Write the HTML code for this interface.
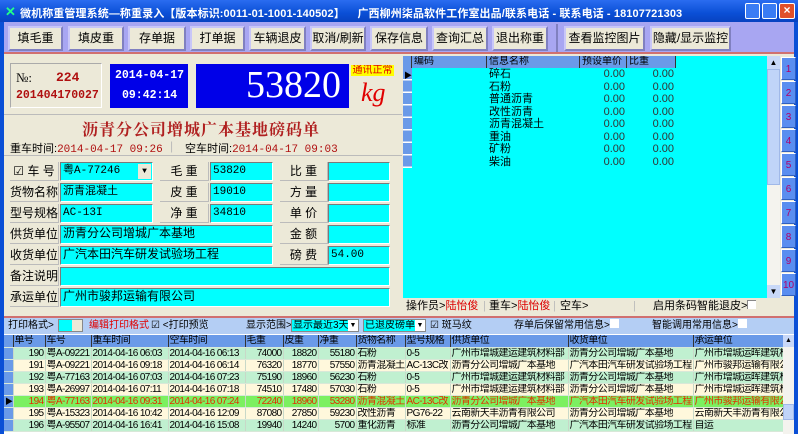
<!DOCTYPE html>
<html><head><meta charset="utf-8"><style>
*{box-sizing:border-box;margin:0;padding:0}
body{width:798px;height:434px;overflow:hidden;position:relative;background:#0a4fd6;font-family:"Liberation Sans","Noto Sans CJK SC",sans-serif;font-size:12px;color:#000}
.a{position:absolute;white-space:nowrap;overflow:hidden}
.btn{position:absolute;top:26px;height:25px;background:#ece9d8;border:2px solid #c8c6f8;border-right-color:#8080c0;border-bottom-color:#8080c0;text-align:center;line-height:21px;font-size:12px;white-space:nowrap;overflow:hidden}
.lbl{position:absolute;height:19px;line-height:19px;font-size:12px;text-align:center;border-bottom:1px solid #bbb;border-right:1px solid #bbb;background:#ece9d8;white-space:nowrap;overflow:hidden}
.inp{position:absolute;height:19px;line-height:17px;background:#00ffff;border:1px solid #7a7a7a;border-right-color:#fff;border-bottom-color:#fff;font-family:"Liberation Mono","Noto Sans CJK SC",monospace;font-size:11px;padding-left:2px;white-space:nowrap;overflow:hidden}
.gh{position:absolute;height:12px;line-height:12px;font-size:10px;border-right:1px solid #333;padding-left:2px;overflow:hidden;white-space:nowrap}
.nb{position:absolute;left:781px;width:15px;height:23px;background:#5a8ef0;color:#b0006a;font-size:10px;text-align:center;line-height:23px;border:1px solid #fff;border-right-color:#3060c0;border-bottom-color:#3060c0}
table{border-collapse:collapse;position:absolute}
td{font-size:10px;letter-spacing:-0.6px;height:12px;line-height:11px;padding:0 1px;white-space:nowrap;overflow:hidden;border-right:1px solid #c8d8c8;border-bottom:1px solid #d8e8d8}
</style></head><body>
<div class="a" style="left:0;top:0;width:798px;height:22px;background:linear-gradient(#2a6cf0,#0a4fd6 60%,#0842c0)"></div>
<div class="a" style="left:5px;top:4px;color:#2f8;font-size:13px;font-weight:bold">✕</div>
<div class="a" style="left:20px;top:5px;color:#fff;font-weight:bold;font-size:11px;letter-spacing:0.1px">微机称重管理系统—称重录入【版本标识:0011-01-1001-140502】&nbsp;&nbsp;&nbsp;&nbsp;广西柳州柒品软件工作室出品/联系电话 - 联系电话 - 18107721303</div>
<div class="a" style="left:745px;top:3px;width:15px;height:16px;background:#3a7cf4;border:1px solid #fff;border-radius:2px"></div>
<div class="a" style="left:762px;top:3px;width:15px;height:16px;background:#3a7cf4;border:1px solid #fff;border-radius:2px"></div>
<div class="a" style="left:779px;top:3px;width:16px;height:16px;background:#e0502a;border:1px solid #fff;border-radius:2px;color:#fff;text-align:center;line-height:13px;font-weight:bold">×</div>
<div class="a" style="left:4px;top:22px;width:790px;height:31px;background:#a8a6f2"></div>
<div class="btn" style="left:8px;width:55px">填毛重</div>
<div class="btn" style="left:68px;width:56px">填皮重</div>
<div class="btn" style="left:128px;width:58px">存单据</div>
<div class="btn" style="left:190px;width:55px">打单据</div>
<div class="btn" style="left:249px;width:57px">车辆退皮</div>
<div class="btn" style="left:310px;width:56px">取消/刷新</div>
<div class="btn" style="left:370px;width:58px">保存信息</div>
<div class="btn" style="left:432px;width:56px">查询汇总</div>
<div class="btn" style="left:492px;width:56px">退出称重</div>
<div class="a" style="left:556px;top:24px;width:2px;height:28px;background:#8080c0"></div>
<div class="btn" style="left:564px;width:81px">查看监控图片</div>
<div class="btn" style="left:650px;width:81px">隐藏/显示监控</div>
<div class="a" style="left:4px;top:52px;width:790px;height:2px;background:#d07070"></div>
<div class="a" style="left:4px;top:54px;width:398px;height:264px;background:#ece9d8"></div>
<div class="a" style="left:10px;top:63px;width:92px;height:45px;border:1px solid #aaa;border-right-color:#fff;border-bottom-color:#fff;background:#ece9d8"></div>
<div class="a" style="left:16px;top:70px;font-family:'Liberation Serif',serif;font-size:13px">№:</div>
<div class="a" style="left:56px;top:70px;color:#b01010;font-family:'Liberation Mono',monospace;font-weight:bold;font-size:13px">224</div>
<div class="a" style="left:16px;top:89px;color:#b01010;font-family:'Liberation Mono',monospace;font-weight:bold;font-size:11.5px">201404170027</div>
<div class="a" style="left:110px;top:64px;width:78px;height:44px;background:#0000e8"></div>
<div class="a" style="left:115px;top:69px;color:#fff;font-family:'Liberation Mono',monospace;font-weight:bold;font-size:11.5px">2014-04-17</div>
<div class="a" style="left:122px;top:89px;color:#fff;font-family:'Liberation Mono',monospace;font-weight:bold;font-size:11.5px">09:42:14</div>
<div class="a" style="left:196px;top:64px;width:153px;height:44px;background:#0000e8"></div>
<div class="a" style="left:246px;top:62px;color:#fff;font-family:'Liberation Serif',serif;font-size:38px;line-height:46px">53820</div>
<div class="a" style="left:351px;top:65px;width:43px;height:11px;background:#ffff00;color:#e00000;font-size:10px;line-height:11px;text-align:center">通讯正常</div>
<div class="a" style="left:361px;top:78px;color:#e00000;font-family:'Liberation Serif',serif;font-style:italic;font-size:26px;line-height:30px">kg</div>
<div class="a" style="left:4px;top:114px;width:398px;height:1px;background:#bbb"></div>
<div class="a" style="left:0;top:117px;width:402px;text-align:center;color:#b02020;font-family:'Liberation Serif','Noto Serif CJK SC',serif;font-size:16px;font-weight:bold;letter-spacing:1px">沥青分公司增城广本基地磅码单</div>
<div class="a" style="left:10px;top:140px;font-size:11px">重车时间:<span style="color:#b01010;font-family:'Liberation Mono',monospace">2014-04-17 09:26</span></div>
<div class="a" style="left:170px;top:139px;color:#bbb">|</div>
<div class="a" style="left:185px;top:140px;font-size:11px">空车时间:<span style="color:#b01010;font-family:'Liberation Mono',monospace">2014-04-17 09:03</span></div>
<div class="a" style="left:4px;top:155px;width:398px;height:1px;background:#bbb"></div>
<div class="lbl" style="left:10px;top:162px;width:49px">☑ 车 号</div>
<div class="inp" style="left:60px;top:162px;width:93px">粤A-77246<span style="position:absolute;right:1px;top:1px;width:13px;height:15px;background:#ece9d8;font-size:8px;line-height:15px;text-align:center">▼</span></div>
<div class="lbl" style="left:160px;top:162px;width:49px">毛 重</div>
<div class="inp" style="left:210px;top:162px;width:63px">53820</div>
<div class="lbl" style="left:280px;top:162px;width:48px">比 重</div>
<div class="inp" style="left:328px;top:162px;width:62px"></div>
<div class="lbl" style="left:10px;top:183px;width:49px">货物名称</div>
<div class="inp" style="left:60px;top:183px;width:93px">沥青混凝土</div>
<div class="lbl" style="left:160px;top:183px;width:49px">皮 重</div>
<div class="inp" style="left:210px;top:183px;width:63px">19010</div>
<div class="lbl" style="left:280px;top:183px;width:48px">方 量</div>
<div class="inp" style="left:328px;top:183px;width:62px"></div>
<div class="lbl" style="left:10px;top:204px;width:49px">型号规格</div>
<div class="inp" style="left:60px;top:204px;width:93px">AC-13I</div>
<div class="lbl" style="left:160px;top:204px;width:49px">净 重</div>
<div class="inp" style="left:210px;top:204px;width:63px">34810</div>
<div class="lbl" style="left:280px;top:204px;width:48px">单 价</div>
<div class="inp" style="left:328px;top:204px;width:62px"></div>
<div class="lbl" style="left:10px;top:225px;width:49px">供货单位</div>
<div class="inp" style="left:60px;top:225px;width:213px;font-size:12px">沥青分公司增城广本基地</div>
<div class="lbl" style="left:280px;top:225px;width:48px">金 额</div>
<div class="inp" style="left:328px;top:225px;width:62px"></div>
<div class="lbl" style="left:10px;top:246px;width:49px">收货单位</div>
<div class="inp" style="left:60px;top:246px;width:213px;font-size:12px">广汽本田汽车研发试验场工程</div>
<div class="lbl" style="left:280px;top:246px;width:48px">磅 费</div>
<div class="inp" style="left:328px;top:246px;width:62px">54.00</div>
<div class="lbl" style="left:10px;top:267px;width:49px">备注说明</div>
<div class="inp" style="left:60px;top:267px;width:330px"></div>
<div class="lbl" style="left:10px;top:288px;width:49px">承运单位</div>
<div class="inp" style="left:60px;top:288px;width:330px;font-size:12px">广州市骏邦运输有限公司</div>
<div class="a" style="left:402px;top:54px;width:392px;height:264px;background:#ece9d8"></div>
<div class="a" style="left:403px;top:56px;width:364px;height:242px;background:#00ffff"></div>
<div class="a" style="left:403px;top:56px;width:273px;height:12px;background:#6a9ae8"></div>
<div class="gh" style="left:403px;top:56px;width:9px"></div>
<div class="gh" style="left:412px;top:56px;width:75px">编码</div>
<div class="gh" style="left:487px;top:56px;width:93px">信息名称</div>
<div class="gh" style="left:580px;top:56px;width:47px">预设单价</div>
<div class="gh" style="left:627px;top:56px;width:49px">比重</div>
<div class="a" style="left:403px;top:68px;width:9px;height:100px;background:repeating-linear-gradient(#6a9ae8 0 11px,#fff 11px 12.5px)"></div>
<div class="a" style="left:404px;top:70px;font-size:8px">▶</div>
<div class="a" style="left:489px;top:68px;font-size:11px;line-height:12.5px">碎石<br>石粉<br>普通沥青<br>改性沥青<br>沥青混凝土<br>重油<br>矿粉<br>柴油</div>
<div class="a" style="left:580px;top:68px;width:45px;text-align:right;font-size:11px;line-height:12.5px;color:#333">0.00<br>0.00<br>0.00<br>0.00<br>0.00<br>0.00<br>0.00<br>0.00</div>
<div class="a" style="left:627px;top:68px;width:47px;text-align:right;font-size:11px;line-height:12.5px;color:#333">0.00<br>0.00<br>0.00<br>0.00<br>0.00<br>0.00<br>0.00<br>0.00</div>
<div class="a" style="left:767px;top:56px;width:13px;height:242px;background:#f4f3ee"></div>
<div class="a" style="left:767px;top:56px;width:13px;height:13px;background:#c8d8f8;font-size:8px;text-align:center;line-height:13px">▲</div>
<div class="a" style="left:767px;top:69px;width:13px;height:116px;background:#c0d4f8;border:1px solid #a0b8e8"></div>
<div class="a" style="left:767px;top:285px;width:13px;height:13px;background:#c8d8f8;font-size:8px;text-align:center;line-height:13px">▼</div>
<div class="nb" style="top:57px">1</div><div class="nb" style="top:81px">2</div><div class="nb" style="top:105px">3</div><div class="nb" style="top:129px">4</div><div class="nb" style="top:153px">5</div><div class="nb" style="top:177px">6</div><div class="nb" style="top:201px">7</div><div class="nb" style="top:225px">8</div><div class="nb" style="top:249px">9</div><div class="nb" style="top:273px">10</div>
<div class="a" style="left:403px;top:299px;width:390px;height:15px;font-size:11px;line-height:15px">
<span style="position:absolute;left:3px">操作员&gt;<span style="color:#d00">陆怡俊</span></span>
<span style="position:absolute;left:80px;color:#bbb">|</span>
<span style="position:absolute;left:86px">重车&gt;<span style="color:#d00">陆怡俊</span></span>
<span style="position:absolute;left:150px;color:#bbb">|</span>
<span style="position:absolute;left:157px">空车&gt;</span>
<span style="position:absolute;left:230px;color:#bbb">|</span>
<span style="position:absolute;left:250px">启用条码智能退皮&gt;<span style="display:inline-block;width:9px;height:9px;background:#fff;border-left:1px solid #888;border-top:1px solid #888"></span></span></div>
<div class="a" style="left:4px;top:316px;width:790px;height:2px;background:#d07070"></div>
<div class="a" style="left:4px;top:318px;width:790px;height:16px;background:#b4cef4"></div>
<div class="a" style="left:8px;top:319px;font-size:10px;line-height:14px">打印格式&gt;</div>
<div class="a" style="left:58px;top:319px;width:25px;height:13px;background:#00ffff;border:1px solid #888"><span style="position:absolute;right:0;top:0;width:10px;height:11px;background:#ece9d8"></span></div>
<div class="a" style="left:89px;top:319px;font-size:10px;line-height:14px;color:#e00000">编辑打印格式</div>
<div class="a" style="left:151px;top:319px;font-size:10px;line-height:14px">☑ &lt;打印预览</div>
<div class="a" style="left:246px;top:319px;font-size:10px;line-height:14px">显示范围&gt;</div>
<div class="a" style="left:291px;top:319px;width:68px;height:13px;background:#00ffff;border:1px solid #888;font-size:10px;line-height:11px;padding-left:1px">显示最近3天<span style="position:absolute;right:0;top:0;width:10px;height:11px;background:#fff;font-size:7px;text-align:center">▼</span></div>
<div class="a" style="left:363px;top:319px;width:63px;height:13px;background:#00ffff;border:1px solid #888;font-size:10px;line-height:11px;padding-left:1px">已退皮磅单<span style="position:absolute;right:0;top:0;width:10px;height:11px;background:#fff;font-size:7px;text-align:center">▼</span></div>
<div class="a" style="left:430px;top:319px;font-size:10px;line-height:14px">☑ 斑马纹</div>
<div class="a" style="left:514px;top:319px;font-size:10px;line-height:14px">存单后保留常用信息&gt;<span style="display:inline-block;width:9px;height:9px;background:#fff"></span></div>
<div class="a" style="left:652px;top:319px;font-size:10px;line-height:14px">智能调用常用信息&gt;<span style="display:inline-block;width:9px;height:9px;background:#fff"></span></div>
<div class="a" style="left:4px;top:334px;width:790px;height:100px;background:#fff"></div>
<table style="left:4px;top:335px;width:779px;table-layout:fixed">
<colgroup><col style="width:9px"><col style="width:32px"><col style="width:46px"><col style="width:77px"><col style="width:77px"><col style="width:38px"><col style="width:35px"><col style="width:38px"><col style="width:49px"><col style="width:45px"><col style="width:118px"><col style="width:125px"><col style="width:90px"></colgroup>
<tr style="background:#6a9ae8"><td style="border-right:1px solid #333"></td><td style="border-right:1px solid #333">单号</td><td style="border-right:1px solid #333">车号</td><td style="border-right:1px solid #333">重车时间</td><td style="border-right:1px solid #333">空车时间</td><td style="border-right:1px solid #333">毛重</td><td style="border-right:1px solid #333">皮重</td><td style="border-right:1px solid #333">净重</td><td style="border-right:1px solid #333">货物名称</td><td style="border-right:1px solid #333">型号规格</td><td style="border-right:1px solid #333">供货单位</td><td style="border-right:1px solid #333">收货单位</td><td>承运单位</td></tr>
<tr style="background:#c0f0d0"><td style="background:#6a9ae8"></td><td align="right">190</td><td>粤A-09221</td><td>2014-04-16 06:03</td><td>2014-04-16 06:13</td><td align="right">74000</td><td align="right">18820</td><td align="right">55180</td><td>石粉</td><td>0-5</td><td>广州市增城建运建筑材料部</td><td>沥青分公司增城广本基地</td><td>广州市增城运晖建筑材</td></tr>
<tr style="background:#fff8dc"><td style="background:#6a9ae8"></td><td align="right">191</td><td>粤A-09221</td><td>2014-04-16 09:18</td><td>2014-04-16 06:14</td><td align="right">76320</td><td align="right">18770</td><td align="right">57550</td><td>沥青混凝土</td><td>AC-13C改</td><td>沥青分公司增城广本基地</td><td>广汽本田汽车研发试验场工程</td><td>广州市骏邦运输有限公</td></tr>
<tr style="background:#c0f0d0"><td style="background:#6a9ae8"></td><td align="right">192</td><td>粤A-77163</td><td>2014-04-16 07:03</td><td>2014-04-16 07:23</td><td align="right">75190</td><td align="right">18960</td><td align="right">56230</td><td>石粉</td><td>0-5</td><td>广州市增城建运建筑材料部</td><td>沥青分公司增城广本基地</td><td>广州市增城运晖建筑材</td></tr>
<tr style="background:#fff8dc"><td style="background:#6a9ae8"></td><td align="right">193</td><td>粤A-26997</td><td>2014-04-16 07:11</td><td>2014-04-16 07:18</td><td align="right">74510</td><td align="right">17480</td><td align="right">57030</td><td>石粉</td><td>0-5</td><td>广州市增城建运建筑材料部</td><td>沥青分公司增城广本基地</td><td>广州市增城运晖建筑材</td></tr>
<tr style="background:#7cf060;color:#e03000"><td style="background:#6a9ae8;color:#000;font-size:8px">▶</td><td align="right">194</td><td>粤A-77163</td><td>2014-04-16 09:31</td><td>2014-04-16 07:24</td><td align="right">72240</td><td align="right">18960</td><td align="right">53280</td><td>沥青混凝土</td><td>AC-13C改</td><td>沥青分公司增城广本基地</td><td>广汽本田汽车研发试验场工程</td><td>广州市骏邦运输有限公</td></tr>
<tr style="background:#fff8dc"><td style="background:#6a9ae8"></td><td align="right">195</td><td>粤A-15323</td><td>2014-04-16 10:42</td><td>2014-04-16 12:09</td><td align="right">87080</td><td align="right">27850</td><td align="right">59230</td><td>改性沥青</td><td>PG76-22</td><td>云南新天丰沥青有限公司</td><td>沥青分公司增城广本基地</td><td>云南新天丰沥青有限公</td></tr>
<tr style="background:#c0f0d0"><td style="background:#6a9ae8"></td><td align="right">196</td><td>粤A-95507</td><td>2014-04-16 16:41</td><td>2014-04-16 15:08</td><td align="right">19940</td><td align="right">14240</td><td align="right">5700</td><td>重化沥青</td><td>标准</td><td>沥青分公司增城广本基地</td><td>广汽本田汽车研发试验场工程</td><td>自运</td></tr>
</table>
<div class="a" style="left:783px;top:335px;width:11px;height:99px;background:#f4f3ee"></div>
<div class="a" style="left:783px;top:335px;width:11px;height:12px;background:#c8d8f8;font-size:7px;text-align:center;line-height:12px">▲</div>
<div class="a" style="left:783px;top:404px;width:11px;height:16px;background:#c0d4f8;border:1px solid #a0b8e8"></div>
</body></html>
